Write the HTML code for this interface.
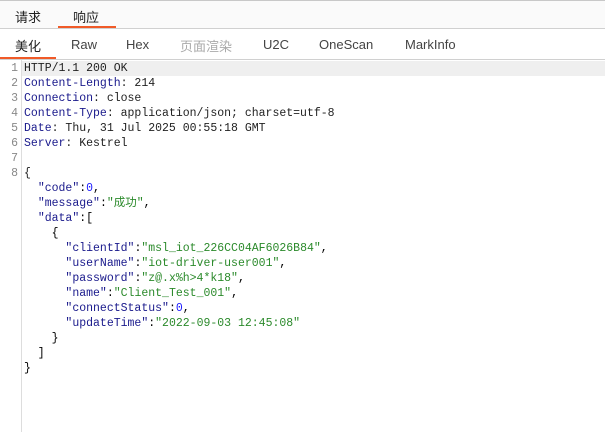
<!DOCTYPE html>
<html><head><meta charset="utf-8"><style>
body{margin:0;width:605px;height:432px;overflow:hidden;background:#fff;font-family:"Liberation Sans","Noto Sans CJK SC",sans-serif;position:relative}
.r1{position:absolute;left:0;top:0;width:605px;height:29px;background:#fafafa;border-top:1px solid #c8c8c8;border-bottom:1px solid #d0d0d0;box-sizing:border-box}
.r2{position:absolute;left:0;top:29px;width:605px;height:31px;background:#fff;border-bottom:1px solid #d0d0d0;box-sizing:border-box}
.t{position:absolute;font-size:13px;color:#222}
.ul{position:absolute;height:2px;background:#f05a28}
.gut{position:absolute;left:21px;top:60px;width:1px;height:372px;background:#ddd}
.hl{position:absolute;left:22px;top:61px;width:583px;height:15px;background:#efefef}
.code{position:absolute;left:0;top:61px;font-family:"Liberation Mono","Noto Sans CJK SC",monospace;font-size:11.5px}
.code div{height:15px;line-height:15px;white-space:pre;overflow:visible}
.ln{display:inline-block;width:18px;text-align:right;color:#888;margin-right:6px}
.k{color:#1a1a8c}.s{color:#2b8a2b}.n{color:#1a1aff}.p{color:#222}
</style></head><body>
<div class="r1"></div>
<div class="t" style="left:15px;top:7px">请求</div>
<div class="t" style="left:73px;top:7px">响应</div>
<div class="ul" style="left:58px;top:26px;width:58px"></div>
<div class="r2"></div>
<div class="t" style="left:15px;top:36px">美化</div>
<div class="t" style="left:71px;top:37px;color:#444">Raw</div>
<div class="t" style="left:126px;top:37px;color:#444">Hex</div>
<div class="t" style="left:180px;top:36px;color:#aaa">页面渲染</div>
<div class="t" style="left:263px;top:37px;color:#444">U2C</div>
<div class="t" style="left:319px;top:37px;color:#444">OneScan</div>
<div class="t" style="left:405px;top:37px;color:#444">MarkInfo</div>
<div class="ul" style="left:0;top:57px;width:56px"></div>
<div class="hl"></div>
<div class="gut"></div>
<div class="code">
<div><span class="ln">1</span><span class="p">HTTP/1.1 200 OK</span></div>
<div><span class="ln">2</span><span class="k">Content-Length</span><span class="p">: 214</span></div>
<div><span class="ln">3</span><span class="k">Connection</span><span class="p">: close</span></div>
<div><span class="ln">4</span><span class="k">Content-Type</span><span class="p">: application/json; charset=utf-8</span></div>
<div><span class="ln">5</span><span class="k">Date</span><span class="p">: Thu, 31 Jul 2025 00:55:18 GMT</span></div>
<div><span class="ln">6</span><span class="k">Server</span><span class="p">: Kestrel</span></div>
<div><span class="ln">7</span></div>
<div><span class="ln">8</span><span class="p">{</span></div>
<div><span class="ln"></span>  <span class="k">"code"</span>:<span class="n">0</span>,</div>
<div><span class="ln"></span>  <span class="k">"message"</span>:<span class="s">"成功"</span>,</div>
<div><span class="ln"></span>  <span class="k">"data"</span>:[</div>
<div><span class="ln"></span>    {</div>
<div><span class="ln"></span>      <span class="k">"clientId"</span>:<span class="s">"msl_iot_226CC04AF6026B84"</span>,</div>
<div><span class="ln"></span>      <span class="k">"userName"</span>:<span class="s">"iot-driver-user001"</span>,</div>
<div><span class="ln"></span>      <span class="k">"password"</span>:<span class="s">"z@.x%h&gt;4*k18"</span>,</div>
<div><span class="ln"></span>      <span class="k">"name"</span>:<span class="s">"Client_Test_001"</span>,</div>
<div><span class="ln"></span>      <span class="k">"connectStatus"</span>:<span class="n">0</span>,</div>
<div><span class="ln"></span>      <span class="k">"updateTime"</span>:<span class="s">"2022-09-03 12:45:08"</span></div>
<div><span class="ln"></span>    }</div>
<div><span class="ln"></span>  ]</div>
<div><span class="ln"></span>}</div>
</div>
</body></html>
